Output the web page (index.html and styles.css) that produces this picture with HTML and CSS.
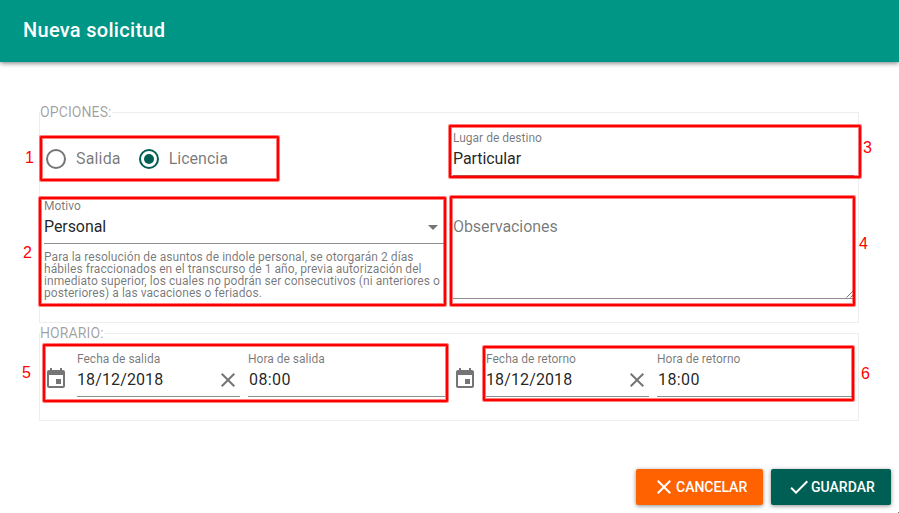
FILE: index.html
```html
<!DOCTYPE html>
<html lang="es">
<head>
<meta charset="utf-8">
<title>Nueva solicitud</title>
<link rel="stylesheet" href="styles.css">
</head>
<body>
<svg class="defs" aria-hidden="true">
  <symbol id="event" viewBox="0 0 24 24"><path d="M17 12h-5v5h5v-5zM16 1v2H8V1H6v2H5c-1.110 0-1.990.9-1.990 2L3 19c0 1.100.89 2 2 2h14c1.100 0 2-.9 2-2V5c0-1.100-.9-2-2-2h-1V1h-2zm3 18H5V8h14v11z"/></symbol>
  <symbol id="close" viewBox="0 0 24 24"><path d="M19 6.410L17.590 5 12 10.590 6.410 5 5 6.410 10.590 12 5 17.590 6.410 19 12 13.410 17.590 19 19 17.590 13.410 12z"/></symbol>
  <symbol id="check" viewBox="0 0 24 24"><path d="M9 16.170L4.830 12l-1.420 1.410L9 19 21 7l-1.410-1.410z"/></symbol>
</svg>
<header class="toolbar"><h1>Nueva solicitud</h1></header>
<main class="form">
  <fieldset class="options">
    <legend>OPCIONES:</legend>
    <div class="options-grid">
      <div class="radios">
        <span class="radio"></span><span class="radio-text first">Salida</span>
        <span class="radio on"></span><span class="radio-text">Licencia</span>
      </div>
      <div class="field"><label>Lugar de destino</label><div class="value">Particular</div></div>
      <div>
        <div class="field"><label>Motivo</label><div class="value select">Personal<i class="arrow"></i></div></div>
        <p class="hint">Para la resolución de asuntos de indole personal, se otorgarán 2 días<br>hábiles fraccionados en el transcurso de 1 año, previa autorización del<br>inmediato superior, los cuales no podrán ser consecutivos (ni anteriores o<br>posteriores) a las vacaciones o feriados.</p>
      </div>
      <div class="notes"><span>Observaciones</span>
        <svg class="grip" viewBox="0 0 8 8"><path d="M0.500 7.500L7.500 .5M4.500 7.500L7.500 4.500"/></svg>
      </div>
    </div>
  </fieldset>
  <fieldset class="schedule">
    <legend>HORARIO:</legend>
    <div class="schedule-grid">
      <svg class="icon"><use href="#event"/></svg>
      <div class="field"><label>Fecha de salida</label><div class="value date">18/12/2018<svg class="icon"><use href="#close"/></svg></div></div>
      <div class="field"><label>Hora de salida</label><div class="value time">08:00</div></div>
      <svg class="icon"><use href="#event"/></svg>
      <div class="field"><label>Fecha de retorno</label><div class="value date">18/12/2018<svg class="icon"><use href="#close"/></svg></div></div>
      <div class="field"><label>Hora de retorno</label><div class="value time">18:00</div></div>
    </div>
  </fieldset>
</main>
<footer class="actions">
  <button class="cancel"><svg class="icon"><use href="#close"/></svg>CANCELAR</button>
  <button class="save"><svg class="icon"><use href="#check"/></svg>GUARDAR</button>
</footer>
<div class="mark m1"></div><div class="mark m2"></div><div class="mark m3"></div>
<div class="mark m4"></div><div class="mark m5"></div><div class="mark m6"></div>
<span class="num n1">1</span><span class="num n2">2</span><span class="num n3">3</span>
<span class="num n4">4</span><span class="num n5">5</span><span class="num n6">6</span>
<i class="corner"></i>
</body>
</html>
```
FILE: styles.css
```css
* { box-sizing: border-box; }
body {
  margin: 0;
  height: 513px;
  overflow: hidden;
  position: relative;
  background: #fff;
  color: rgba(0, 0, 0, .87);
  font-family: Roboto, sans-serif;
}
.defs { display: none; }
.toolbar {
  height: 62px;
  padding: 0 23px;
  display: flex;
  align-items: center;
  background: #009685;
  color: #fff;
  box-shadow: 0 1px 5px rgba(0, 0, 0, .55);
}
h1 { margin: 0 0 2px; font-size: 20px; line-height: 24px; font-weight: 500; letter-spacing: .3px; }
.form { padding: 41px 40px 0 39px; }
fieldset { margin: 0; padding: 10px 4px 0; border: 1px solid #eee; min-width: 0; }
.options { height: 220px; }
.schedule { height: 97px; margin-top: 1px; }
legend { margin-left: -4px; padding: 0; height: 18px; font-size: 14px; line-height: 18px; letter-spacing: .1px; color: rgba(0, 0, 0, .38); }
.options-grid { display: grid; grid-template-columns: 400px 401px; grid-template-rows: 45px 100px; gap: 23px 9px; }
.radios { display: flex; align-items: center; padding: 10px 0 0 2px; font-size: 16px; color: rgba(0, 0, 0, .54); }
.radio { width: 20px; height: 20px; border: 2px solid #757575; border-radius: 50%; margin-right: 10px; display: grid; place-items: center; }
.radio.on { border-color: #005f54; }
.radio.on::after { content: ""; width: 10px; height: 10px; border-radius: 50%; background: #005f54; }
.radio-text.first { margin-right: 18px; letter-spacing: .17px; }
.field { height: 45px; border-bottom: 1px solid #8f8f8f; min-width: 0; }
label { display: block; font-size: 12px; line-height: 14px; color: rgba(0, 0, 0, .54); }
.value { margin-top: 4px; height: 20px; font-size: 16px; line-height: 20px; letter-spacing: -.08px; display: flex; justify-content: space-between; align-items: center; }
.value.date { letter-spacing: .12px; }
.value.time { letter-spacing: .4px; padding-left: 1px; }
.arrow { border: 5px solid transparent; border-top-color: #757575; border-bottom: 0; margin-right: 6px; }
.hint { margin: 7px 0 0; font-size: 12px; line-height: 12px; letter-spacing: .055px; color: rgba(0, 0, 0, .54); white-space: nowrap; }
.notes { position: relative; height: 100px; padding-top: 18px; border-bottom: 1px solid #8f8f8f; font-size: 16px; line-height: 20px; letter-spacing: -.08px; color: rgba(0, 0, 0, .54); }
.grip { position: absolute; right: 0; bottom: 0; width: 8px; height: 8px; fill: none; stroke: #555; stroke-width: .8; }
.schedule-grid { display: grid; grid-template-columns: 25px 163px 197px 25px 163px 196px; column-gap: 8px; }
.schedule-grid > .icon { margin-top: 15px; }
.icon { width: 24px; height: 24px; fill: #757575; flex: none; }
.actions { display: flex; justify-content: flex-end; gap: 8px; margin-top: 48px; padding-right: 8px; }
button { height: 36px; border: 0; border-radius: 2px; padding: 0 16px; display: flex; align-items: center; color: #fff; font: 500 14px Roboto, sans-serif; box-shadow: 0 1px 4px rgba(0, 0, 0, .45); }
button .icon { fill: #fff; }
.cancel { width: 127px; background: #ff6200; }
.save { width: 120px; background: #005f54; }
.mark { position: absolute; border: 2px solid #f00; border-radius: 1px; box-shadow: 0 0 0 1px rgba(255, 0, 0, .5), inset 0 0 0 1px rgba(255, 0, 0, .5); }
.m1 { left: 40px; top: 136px; width: 239px; height: 45px; }
.m2 { left: 39px; top: 197px; width: 407px; height: 109px; }
.m3 { left: 449px; top: 125px; width: 412px; height: 53px; }
.m4 { left: 450px; top: 196px; width: 405px; height: 110px; }
.m5 { left: 43px; top: 344px; width: 405px; height: 58px; }
.m6 { left: 483px; top: 346px; width: 371px; height: 55px; }
.num { position: absolute; font: 16px/18px "Liberation Sans", sans-serif; color: #f00; }
.n1 { left: 25px; top: 149px; }
.n2 { left: 23px; top: 244px; }
.n3 { left: 863px; top: 139px; }
.n4 { left: 859px; top: 235px; }
.n5 { left: 22px; top: 364px; }
.n6 { left: 861px; top: 365px; }
.corner { position: absolute; right: 0; bottom: 0; width: 1px; height: 1px; background: #777; }
```
